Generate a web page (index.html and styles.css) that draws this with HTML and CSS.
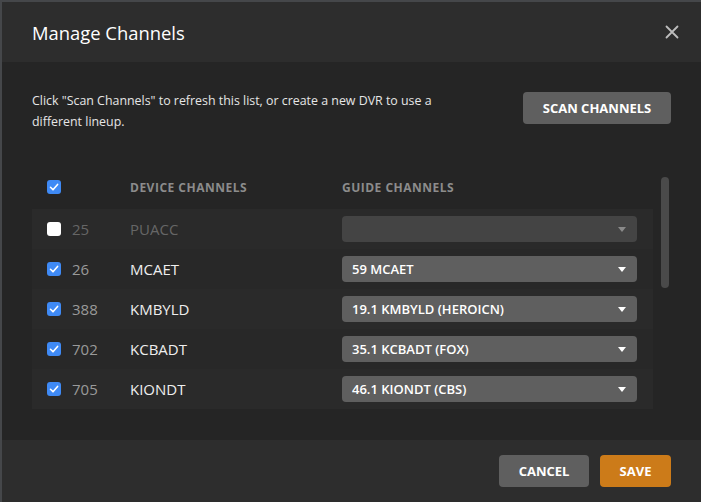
FILE: index.html
```html
<!DOCTYPE html>
<html lang="en">
<head>
    <meta charset="UTF-8">
    <title>Manage Channels</title>
    <link rel="stylesheet" href="styles.css">
</head>
<body>

    <div class="modal">
        <div class="modal-header">
            <h2>Manage Channels</h2>
            <button class="btn-close" aria-label="Close">
                <svg width="14" height="14" viewBox="0 0 14 14">
                    <path d="M1.5 1.5 L12.5 12.5 M12.5 1.5 L1.5 12.5" stroke="#bdbdbd" stroke-width="1.8" stroke-linecap="round"/>
                </svg>
            </button>
        </div>

        <div class="modal-body">
            <div class="intro">
                <p>Click "Scan Channels" to refresh this list, or create a new DVR to use a different lineup.</p>
                <button class="btn btn-scan">Scan Channels</button>
            </div>

            <div class="channels">
                <div class="channel-table">
                    <div class="table-head">
                        <span class="check checked"><svg viewBox="0 0 14 14"><path d="M3.5 7.3 L6 9.8 L10.6 4.4" /></svg></span>
                        <span class="col-num"></span>
                        <span class="col-name">Device Channels</span>
                        <span class="col-guide">Guide Channels</span>
                    </div>

                    <div class="row disabled">
                        <span class="check"></span>
                        <span class="col-num">25</span>
                        <span class="col-name">PUACC</span>
                        <div class="select"><span></span><i class="caret"></i></div>
                    </div>
                    <div class="row">
                        <span class="check checked"><svg viewBox="0 0 14 14"><path d="M3.5 7.3 L6 9.8 L10.6 4.4" /></svg></span>
                        <span class="col-num">26</span>
                        <span class="col-name">MCAET</span>
                        <div class="select"><span>59 MCAET</span><i class="caret"></i></div>
                    </div>
                    <div class="row">
                        <span class="check checked"><svg viewBox="0 0 14 14"><path d="M3.5 7.3 L6 9.8 L10.6 4.4" /></svg></span>
                        <span class="col-num">388</span>
                        <span class="col-name">KMBYLD</span>
                        <div class="select"><span>19.1 KMBYLD (HEROICN)</span><i class="caret"></i></div>
                    </div>
                    <div class="row">
                        <span class="check checked"><svg viewBox="0 0 14 14"><path d="M3.5 7.3 L6 9.8 L10.6 4.4" /></svg></span>
                        <span class="col-num">702</span>
                        <span class="col-name">KCBADT</span>
                        <div class="select"><span>35.1 KCBADT (FOX)</span><i class="caret"></i></div>
                    </div>
                    <div class="row">
                        <span class="check checked"><svg viewBox="0 0 14 14"><path d="M3.5 7.3 L6 9.8 L10.6 4.4" /></svg></span>
                        <span class="col-num">705</span>
                        <span class="col-name">KIONDT</span>
                        <div class="select"><span>46.1 KIONDT (CBS)</span><i class="caret"></i></div>
                    </div>
                </div>
                <div class="scrollbar"></div>
            </div>
        </div>

        <div class="modal-footer">
            <button class="btn btn-cancel">Cancel</button>
            <button class="btn btn-save">Save</button>
        </div>
    </div>

</body>
</html>
```

FILE: styles.css
```css
/* --- Pagina --- */
html, body {
    height: 100%;
}

body {
    margin: 0;
    background-color: #45474a;
    font-family: "Open Sans", "Liberation Sans", sans-serif;
    color: #eeeeee;
    overflow: hidden;
}

/* --- Modal --- */
.modal {
    margin: 2px 0 0 2px;
    height: 500px;
    display: flex;
    flex-direction: column;
    background-color: #252525;
}

.modal-header {
    height: 60px;
    flex-shrink: 0;
    padding: 0 22px 0 30px;
    display: flex;
    align-items: center;
    justify-content: space-between;
    background-color: #2d2d2d;
}

h2 {
    margin: 0;
    font-size: 18.4px;
    font-weight: 400;
    color: #ffffff;
}

.btn-close {
    background: none;
    border: none;
    padding: 0;
    width: 14px;
    height: 14px;
    cursor: pointer;
    display: flex;
}

/* --- Cuerpo --- */
.modal-body {
    flex: 1;
    padding: 28px 30px 0 30px;
}

.intro {
    display: flex;
    justify-content: space-between;
    align-items: flex-start;
}

.intro p {
    margin: 0;
    width: 430px;
    font-size: 12.4px;
    line-height: 21px;
    color: #e6e6e6;
}

.btn {
    height: 32px;
    border: none;
    border-radius: 4px;
    padding: 0;
    font-family: inherit;
    font-size: 13px;
    font-weight: 700;
    text-transform: uppercase;
    white-space: nowrap;
    color: #ffffff;
    cursor: pointer;
}

.btn-scan {
    margin-top: 2px;
    width: 148px;
    background-color: #5f5f5f;
}

/* --- Tabla de canales --- */
.channels {
    margin-top: 35px;
    display: flex;
}

.channel-table {
    width: 621px;
}

.table-head,
.row {
    display: flex;
    align-items: center;
    padding-left: 15px;
    box-sizing: border-box;
}

.table-head {
    height: 42px;
    padding-bottom: 2px;
    font-size: 12px;
    font-weight: 700;
    letter-spacing: 0.5px;
    text-transform: uppercase;
    color: #8c8c8c;
}

.row {
    height: 40px;
    font-size: 15px;
    color: #eeeeee;
}

.row:nth-child(even) { background-color: #2a2a2a; }
.row:nth-child(odd) { background-color: #282828; }

.col-num {
    width: 58px;
    margin-left: 11px;
    color: #9a9a9a;
}

.col-name {
    width: 212px;
}

.row.disabled .col-num,
.row.disabled .col-name {
    color: #666666;
}

.check {
    width: 14px;
    height: 14px;
    border-radius: 3px;
    background-color: #ffffff;
    flex-shrink: 0;
    display: flex;
}

.check.checked {
    background-color: #3f8af5;
}

.check svg {
    width: 14px;
    height: 14px;
    fill: none;
    stroke: #ffffff;
    stroke-width: 1.6;
    stroke-linecap: round;
    stroke-linejoin: round;
}

.select {
    width: 295px;
    height: 26px;
    box-sizing: border-box;
    padding: 0 10px;
    border-radius: 4px;
    background-color: #5f5f5f;
    display: flex;
    align-items: center;
    justify-content: space-between;
    font-size: 13px;
    font-weight: 600;
    color: #ffffff;
}

.row.disabled .select {
    background-color: #444444;
}

.caret {
    width: 0;
    height: 0;
    margin-right: 1px;
    border-left: 4px solid transparent;
    border-right: 4px solid transparent;
    border-top: 5px solid #ffffff;
}

.row.disabled .caret {
    border-top-color: #8a8a8a;
}

.scrollbar {
    width: 8px;
    height: 111px;
    margin-top: 10px;
    margin-left: 8px;
    border-radius: 4px;
    background-color: #4a4a4a;
}

/* --- Pie --- */
.modal-footer {
    height: 62px;
    flex-shrink: 0;
    box-sizing: border-box;
    padding: 15px 30px 0 0;
    display: flex;
    justify-content: flex-end;
    align-items: flex-start;
    gap: 11px;
    background-color: #2d2d2d;
}

.btn-cancel {
    width: 90px;
    background-color: #5f5f5f;
}

.btn-save {
    width: 71px;
    background-color: #cc7b19;
}
```
